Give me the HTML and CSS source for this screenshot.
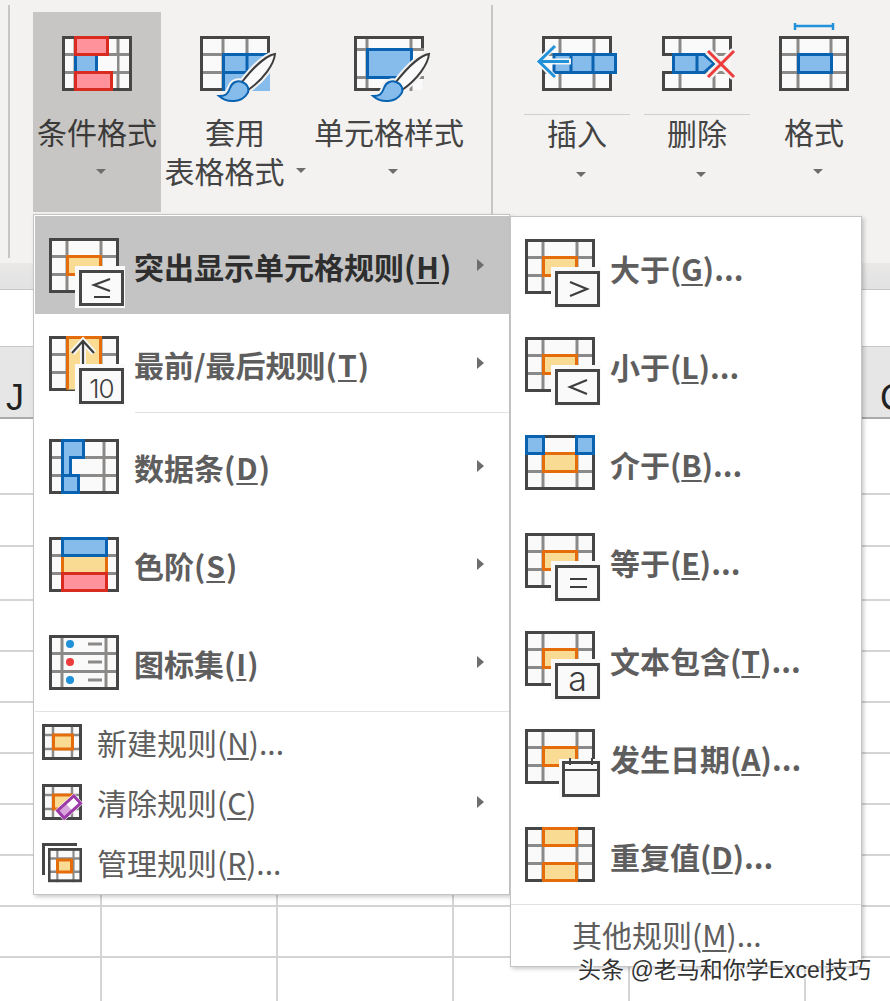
FILE: index.html
```html
<!DOCTYPE html>
<html lang="zh-CN">
<head>
<meta charset="utf-8">
<title>条件格式</title>
<link rel="stylesheet" href="styles.css">
</head>
<body>
<svg class="defs" width="0" height="0" aria-hidden="true">
  <defs>
    <g id="grid">
      <rect class="cell" x="1.5" y="1.5" width="67" height="52"/>
      <path class="inner" d="M18 0V55M52 0V55M0 18.5H70M0 36.5H70"/>
    </g>
    <rect id="frame" class="frame" x="1.5" y="1.5" width="67" height="52"/>
    <g id="hl">
      <use href="#grid"/>
      <use href="#frame"/>
      <rect class="or" x="18.5" y="18.5" width="33" height="18"/>
    </g>
    <g id="box">
      <path class="halo" d="M26 28H76V70H26Z"/>
      <rect class="cell frame" x="31.5" y="33.5" width="42" height="33"/>
    </g>
    <g id="brush">
      <path class="halo-s" d="M75 18C68 19 56 28 42 46L48 54C64 43 74 28 75 18Z"/>
      <path class="halo-s" d="M19 60C26 60 28 58 30 52C32 46 38 44 42 46C48 48 50 54 47 58C42 66 28 68 19 60Z"/>
      <path class="handle" d="M75 18C68 19 56 28 42 46L48 54C64 43 74 28 75 18Z"/>
      <path class="bl thin" d="M19 60C26 60 28 58 30 52C32 46 38 44 42 46C48 48 50 54 47 58C42 66 28 68 19 60Z"/>
    </g>
    <g id="mini">
      <rect class="cell" x="1.5" y="1.5" width="37" height="33"/>
      <path class="inner thin" d="M11 0V36M30 0V36M0 11H40M0 25H40"/>
      <rect class="frame" x="1.5" y="1.5" width="37" height="33"/>
    </g>
  </defs>
</svg>

<div class="page">
  <header class="ribbon">
    <section class="group styles-group">
      <button class="rb rb-cond">
        <svg class="ic" viewBox="0 0 70 55">
          <rect class="cell" x="1.5" y="1.5" width="67" height="52"/>
          <path class="inner" d="M13 0V55M56 0V55M0 18.5H70M0 36.5H70"/>
          <rect class="cell" x="36" y="20" width="19" height="15"/>
          <rect class="frame" x="1.5" y="1.5" width="67" height="52"/>
          <rect class="bl" x="13.5" y="18.5" width="21" height="18"/>
          <rect class="rd" x="13.5" y="1.5" width="32" height="17"/>
          <rect class="rd" x="13.5" y="36.5" width="36" height="17"/>
        </svg>
        <span class="rb-text">条件格式</span>
        <span class="caret"></span>
      </button>
      <button class="rb rb-table">
        <svg class="ic" viewBox="0 0 70 55">
          <rect class="cell" x="1.5" y="1.5" width="67" height="52"/>
          <path class="inner" d="M23 0V55M47 0V55M0 18.5H70M0 36.5H70"/>
          <path class="frame" d="M68.5 17V1.5H1.5V53.5H24"/>
          <rect class="blf" x="23" y="18" width="47" height="37"/>
          <path class="stroke-bl" d="M23.5 55V18.5H68M23.5 36.5H68M47 18V55"/>
          <use href="#brush"/>
        </svg>
        <span class="rb-text">套用<br>表格格式<span class="caret inline"></span></span>
      </button>
      <button class="rb rb-style">
        <svg class="ic" viewBox="0 0 70 55">
          <rect class="cell" x="1.5" y="1.5" width="67" height="52"/>
          <path class="inner" d="M13 0V55M57 0V55M0 13.5H70M0 41.5H70"/>
          <path class="frame" d="M68.5 12V1.5H1.5V53.5H45"/>
          <rect class="bl" x="13.5" y="13.5" width="44" height="28"/>
          <use href="#brush"/>
        </svg>
        <span class="rb-text">单元格样式</span>
        <span class="caret"></span>
      </button>
    </section>
    <section class="group cells-group">
      <button class="rb rb-cell rb-insert">
        <svg class="ic" viewBox="0 0 70 55">
          <use href="#grid"/>
          <use href="#frame"/>
          <rect class="bl" x="12" y="18.5" width="61.5" height="18"/>
          <path class="stroke-bl" d="M29 18V37M51 18V37"/>
          <path class="halo-a" d="M13 9L-3 25.5L13 42M-2 25.5H29"/>
          <path class="arrow" d="M13 10L-3 25.5L13 41M-3 25.5H27"/>
        </svg>
        <span class="rb-text">插入</span>
        <span class="caret"></span>
      </button>
      <button class="rb rb-cell rb-delete">
        <svg class="ic" viewBox="0 0 70 55">
          <use href="#grid"/>
          <rect class="gap" x="-2" y="19" width="13" height="17"/>
          <path class="frame" d="M10 18.5H1.5V1.5H68.5V18.5M68.5 36.5V53.5H1.5V36.5H10"/>
          <path class="bl" d="M11.5 18.5H42L52 27.5L42 36.5H11.5Z"/>
          <path class="stroke-bl" d="M35 18V37"/>
          <path class="halo-x" d="M46 15L72 41M72 15L46 41"/>
          <path class="cross" d="M46 15L72 41M72 15L46 41"/>
        </svg>
        <span class="rb-text">删除</span>
        <span class="caret"></span>
      </button>
      <button class="rb rb-format">
        <svg class="ic" viewBox="0 0 70 55">
          <rect class="cell" x="1.5" y="1.5" width="67" height="52"/>
          <path class="inner" d="M19 0V55M52 0V55M0 18.5H70M0 36.5H70"/>
          <use href="#frame"/>
          <rect class="bl" x="19.5" y="18.5" width="33" height="18"/>
          <path class="arrow thin" d="M16 -13V-6M54 -13V-6M16 -10H54"/>
        </svg>
        <span class="rb-text">格式</span>
        <span class="caret"></span>
      </button>
    </section>
  </header>
  <div class="shade"></div>
  <div class="formula"></div>
  <div class="headers"><span>J</span><span>C</span></div>
  <div class="sheet">
    <div></div><div></div><div></div><div></div><div></div><div></div><div></div><div></div><div></div><div></div><div></div>
  </div>

  <nav class="menu main-menu">
    <div class="item big active">
      <svg class="ic" viewBox="0 0 76 55"><use href="#hl"/><use href="#box"/><path class="sym" d="M61 41L45 47L61 53M45 59H61"/></svg>
      <span class="label">突出显示单元格规则(<u>H</u>)</span><i class="tri"></i>
    </div>
    <div class="item big">
      <svg class="ic" viewBox="0 0 76 55">
        <use href="#grid"/><use href="#frame"/>
        <rect class="orf" x="18.5" y="1.5" width="33" height="52"/>
        <path class="or-line" d="M18.5 53.5V1.5H51.5V36"/>
        <path class="halo-a" d="M23 17L34 5L45 17M34 6V34"/>
        <path class="sym" d="M23 17L34 5L45 17M34 5V34"/>
        <use href="#box"/>
        <text class="tiny-num" x="52.5" y="61.5">10</text>
      </svg>
      <span class="label">最前/最后规则(<u>T</u>)</span><i class="tri"></i>
    </div>
    <div class="divider short"></div>
    <div class="item big after-div">
      <svg class="ic" viewBox="0 0 76 55">
        <rect class="cell" x="1.5" y="1.5" width="67" height="52"/>
        <path class="inner" d="M55 0V55M0 18.5H70M0 36.5H70"/>
        <use href="#frame"/>
        <path class="bl" d="M13.5 1.5H34.5V18.5H21.5V36.5H29.5V53.5H13.5Z"/>
        <path class="stroke-bl" d="M13 36.5H29"/>
      </svg>
      <span class="label">数据条(<u>D</u>)</span><i class="tri"></i>
    </div>
    <div class="item big">
      <svg class="ic" viewBox="0 0 76 55">
        <rect class="cell" x="1.5" y="1.5" width="67" height="52"/>
        <path class="inner" d="M0 18.5H70M0 36.5H70"/>
        <use href="#frame"/>
        <rect class="or" x="13.5" y="18.5" width="44" height="18"/>
        <rect class="bl" x="13.5" y="1.5" width="44" height="17"/>
        <rect class="rd" x="13.5" y="36.5" width="44" height="17"/>
      </svg>
      <span class="label">色阶(<u>S</u>)</span><i class="tri"></i>
    </div>
    <div class="item big">
      <svg class="ic" viewBox="0 0 76 55">
        <rect class="cell" x="1.5" y="1.5" width="67" height="52"/>
        <path class="inner" d="M13 0V55M57 0V55M0 18.5H70M0 36.5H70M39 9H53M39 27H53M39 45H53"/>
        <use href="#frame"/>
        <circle class="dot-b" cx="21" cy="9" r="4"/>
        <circle class="dot-r" cx="21" cy="27" r="4"/>
        <circle class="dot-b" cx="21" cy="45" r="4"/>
      </svg>
      <span class="label">图标集(<u>I</u>)</span><i class="tri"></i>
    </div>
    <div class="divider"></div>
    <div class="item small">
      <svg class="ic mini" viewBox="0 0 40 36"><use href="#mini"/><rect class="or" x="11.5" y="11" width="19" height="14"/></svg>
      <span class="label plain">新建规则(<u>N</u>)...</span>
    </div>
    <div class="item small">
      <svg class="ic mini" viewBox="0 0 40 36">
        <use href="#mini"/><rect class="or" x="11.5" y="11" width="19" height="14"/>
        <g transform="rotate(-42 27 23)">
          <rect class="halo-w" x="14" y="16" width="26" height="14"/>
          <rect class="pl-f" x="16" y="18" width="11" height="10"/>
          <rect class="pl" x="16" y="18" width="22" height="10"/>
        </g>
      </svg>
      <span class="label plain">清除规则(<u>C</u>)</span><i class="tri"></i>
    </div>
    <div class="item small">
      <svg class="ic mini" viewBox="0 0 40 36">
        <path class="frame" d="M1.5 31V0.5H35"/>
        <g transform="translate(6 4) scale(.85 .95)"><use href="#mini"/></g>
        <rect class="or" x="15.5" y="16" width="14" height="12"/>
      </svg>
      <span class="label plain">管理规则(<u>R</u>)...</span>
    </div>
  </nav>

  <nav class="menu sub-menu">
    <div class="item big">
      <svg class="ic" viewBox="0 0 76 55"><use href="#hl"/><use href="#box"/><path class="sym" d="M45 43L62 50L45 57"/></svg>
      <span class="label">大于(<u>G</u>)...</span>
    </div>
    <div class="item big">
      <svg class="ic" viewBox="0 0 76 55"><use href="#hl"/><use href="#box"/><path class="sym" d="M62 43L45 50L62 57"/></svg>
      <span class="label">小于(<u>L</u>)...</span>
    </div>
    <div class="item big">
      <svg class="ic" viewBox="0 0 76 55">
        <use href="#grid"/><use href="#frame"/>
        <rect class="or" x="18.5" y="18.5" width="33" height="18"/>
        <rect class="bl" x="1.5" y="1.5" width="17" height="17"/>
        <rect class="bl" x="51.5" y="1.5" width="17" height="17"/>
      </svg>
      <span class="label">介于(<u>B</u>)...</span>
    </div>
    <div class="item big">
      <svg class="ic" viewBox="0 0 76 55"><use href="#hl"/><use href="#box"/><path class="sym" d="M45 46H62M45 54H62"/></svg>
      <span class="label">等于(<u>E</u>)...</span>
    </div>
    <div class="item big">
      <svg class="ic" viewBox="0 0 76 55"><use href="#hl"/><use href="#box"/><text class="tiny-a" x="52.5" y="60">a</text></svg>
      <span class="label">文本包含(<u>T</u>)...</span>
    </div>
    <div class="item big">
      <svg class="ic" viewBox="0 0 76 55">
        <use href="#hl"/>
        <path class="halo" d="M34 30H76V70H34Z"/>
        <rect class="cell frame" x="38.5" y="33.5" width="35" height="33"/>
        <path class="frame-th" d="M38 41H74M45 29V36M67 29V36"/>
      </svg>
      <span class="label">发生日期(<u>A</u>)...</span>
    </div>
    <div class="item big">
      <svg class="ic" viewBox="0 0 76 55">
        <use href="#grid"/><use href="#frame"/>
        <rect class="or" x="18.5" y="1.5" width="33" height="17"/>
        <rect class="or" x="18.5" y="36.5" width="33" height="17"/>
      </svg>
      <span class="label">重复值(<u>D</u>)...</span>
    </div>
    <div class="divider"></div>
    <div class="item more"><span class="label plain">其他规则(<u>M</u>)...</span></div>
  </nav>

  <div class="watermark">头条 @老马和你学Excel技巧</div>
</div>
</body>
</html>
```

FILE: styles.css
```css
* { box-sizing: border-box; }
html, body { margin: 0; padding: 0; }
body {
  width: 890px;
  height: 1001px;
  overflow: hidden;
  background: #fff;
  font-family: "Noto Sans CJK SC", "Noto Sans", sans-serif;
}
.defs { position: absolute; }
.page { position: relative; width: 890px; height: 1001px; overflow: hidden; }

/* ribbon */
.ribbon {
  display: flex;
  height: 263px;
  background: #f3f2f1;
  padding-top: 5px;
}
.group { display: flex; height: 253px; border-left: 2px solid #c8c6c4; }
.styles-group { margin-left: 8px; width: 483px; padding: 7px 0 0 23px; }
.cells-group { height: 210px; padding: 7px 0 0 0; }
.rb {
  display: flex;
  flex-direction: column;
  align-items: center;
  height: 200px;
  padding: 24px 0 0;
  border: 0;
  background: none;
  font: inherit;
  color: #444;
}
.rb .ic { flex: none; margin-bottom: 21px; }
.rb-text { display: block; font-size: 30px; line-height: 39px; white-space: nowrap; text-align: center; }
.rb-cond { width: 128px; background: #c8c6c4; }
.rb-cond .rb-text { color: #3b3a39; }
.rb-table { width: 148px; }
.rb-style { width: 160px; }
.rb-cell { width: 106px; }
.rb-cell .ic { margin-bottom: 23px; }
.rb-cell .rb-text {
  border-top: 1px solid #d0cfce;
  width: 106px;
  padding-top: 0;
  line-height: 35px;
  margin-bottom: 7px;
}
.rb-insert { margin-left: 31px; }
.rb-delete { margin-left: 14px; }
.rb-format { width: 70px; margin-left: 29px; }
.caret {
  width: 0; height: 0;
  margin-top: 18px;
  margin-left: 7px;
  border-left: 5px solid transparent;
  border-right: 5px solid transparent;
  border-top: 5px solid #6d6d6d;
}
.rb-cell .caret { margin-top: 15px; }
.caret.inline { display: inline-block; margin: 0 0 8px 11px; vertical-align: middle; }

/* sheet */
.shade { height: 27px; background: linear-gradient(#e9e8e7, #e2e2e2); border-bottom: 1px solid #c6c6c6; }
.formula { height: 57px; background: #fff; border-bottom: 1px solid #c8c8c8; }
.headers {
  display: flex;
  justify-content: space-between;
  align-items: flex-end;
  height: 72px;
  padding: 0 0 0 6px;
  background: #e6e6e6;
  border-bottom: 2px solid #aaa;
  color: #222;
  font-family: "Liberation Sans", sans-serif;
  font-size: 36px;
  line-height: 38px;
}
.headers span:last-child { margin-right: -16px; }
.sheet {
  display: grid;
  grid-template-rows: 76px 52px 54px repeat(7, 51px) 44px;
  height: 583px;
  background: repeating-linear-gradient(90deg, transparent 0 100px, #d4d4d4 100px 102px, transparent 102px 176px);
}
.sheet div { border-bottom: 2px solid #d4d4d4; }
.sheet div:last-child { border-bottom: 0; }

/* menus */
.menu {
  position: absolute;
  display: flex;
  flex-direction: column;
  background: #fff;
  border: 1px solid #c4c4c4;
  box-shadow: 2px 2px 4px rgba(0, 0, 0, .2);
  color: #5f5e5e;
}
.main-menu { left: 33px; top: 214px; width: 477px; height: 681px; padding: 1px 0 0 1px; }
.sub-menu { left: 510px; top: 216px; width: 352px; height: 751px; padding: 0; }
.item { display: flex; align-items: center; flex: none; }
.item.big { height: 98px; }
.main-menu .big { padding-left: 14px; }
.main-menu .after-div { margin-top: 4px; }
.sub-menu .big { padding-left: 14px; }
.ic { width: 76px; height: 55px; overflow: visible; flex: none; }
.main-menu .big .label { margin-left: 9px; padding-top: 2px; }
.main-menu .big u { margin: 0 1px; }
.sub-menu .big .label { margin-left: 9px; padding-top: 4px; }
.label { font-size: 30px; font-weight: 700; line-height: 40px; white-space: nowrap; }
.label u { text-decoration-thickness: 1.5px; text-underline-offset: 3px; }
.label.plain { font-weight: 400; }
.active { background: #c4c4c4; }
.active .label { color: #2e2e2e; }
.tri {
  margin-left: auto;
  margin-right: 25px;
  width: 0; height: 0;
  border-top: 6px solid transparent;
  border-bottom: 6px solid transparent;
  border-left: 7px solid #6d6d6d;
}
.divider { height: 1px; background: #e2e1e0; flex: none; }
.divider.short { margin-left: 100px; }
.item.small { height: 60px; padding-left: 7px; }
.item.small .ic.mini { width: 40px; height: 36px; }
.item.small .label { margin-left: 15px; padding-top: 0; }
.sub-menu .divider { margin-top: 1px; }
.item.more { padding: 9px 0 0 61px; }

.watermark {
  position: absolute;
  left: 578px;
  top: 957px;
  font-family: "Liberation Sans", "Noto Sans CJK SC", sans-serif;
  font-size: 23px;
  line-height: 26px;
  color: #333;
  white-space: nowrap;
  text-shadow: 0 0 2px #fff, 0 0 2px #fff, 1px 1px 1px #fff;
}

/* icon parts */
.cell { fill: #fafafa; }
.inner { fill: none; stroke: #8b8a88; stroke-width: 3; }
.inner.thin { stroke-width: 2.5; }
.frame { fill: none; stroke: #464646; stroke-width: 3; }
.cell.frame { fill: #fafafa; }
.frame-th { fill: none; stroke: #464646; stroke-width: 2; }
.or { fill: #f9db93; stroke: #e46c0a; stroke-width: 3; }
.orf { fill: #f9db93; }
.or-line { fill: none; stroke: #e46c0a; stroke-width: 3; }
.bl { fill: #85bcec; stroke: #0a63b0; stroke-width: 3; }
.bl.thin { stroke-width: 2; }
.blf { fill: #85bcec; }
.rd { fill: #ff929b; stroke: #d92b1f; stroke-width: 3; }
.stroke-bl { fill: none; stroke: #0a63b0; stroke-width: 3; }
.halo { fill: #fafafa; }
.active .halo { fill: #d8d8d8; }
.halo-s { fill: #f3f2f1; stroke: #f3f2f1; stroke-width: 6; }
.handle { fill: #fafafa; stroke: #3d3d3d; stroke-width: 2; }
.halo-a { fill: none; stroke: #f6f6f6; stroke-width: 6; }
.arrow { fill: none; stroke: #2191d9; stroke-width: 3; }
.arrow.thin { stroke-width: 2.5; }
.gap { fill: #f3f2f1; }
.halo-x { fill: none; stroke: #f3f2f1; stroke-width: 8; }
.cross { fill: none; stroke: #ee3b3b; stroke-width: 3; }
.sym { fill: none; stroke: #3d3d3d; stroke-width: 2.2; }
.tiny-num { font-family: "Inter", sans-serif; font-weight: 300; font-size: 26px; fill: #3d3d3d; text-anchor: middle; letter-spacing: -1px; }
.tiny-a { font-family: "Inter", sans-serif; font-weight: 300; font-size: 34px; fill: #3d3d3d; text-anchor: middle; }
.dot-b { fill: #2191d9; }
.dot-r { fill: #ee3b3b; }
.halo-w { fill: #fff; }
.pl { fill: none; stroke: #9c3ba8; stroke-width: 3; }
.pl-f { fill: #d8a6dc; }
```
